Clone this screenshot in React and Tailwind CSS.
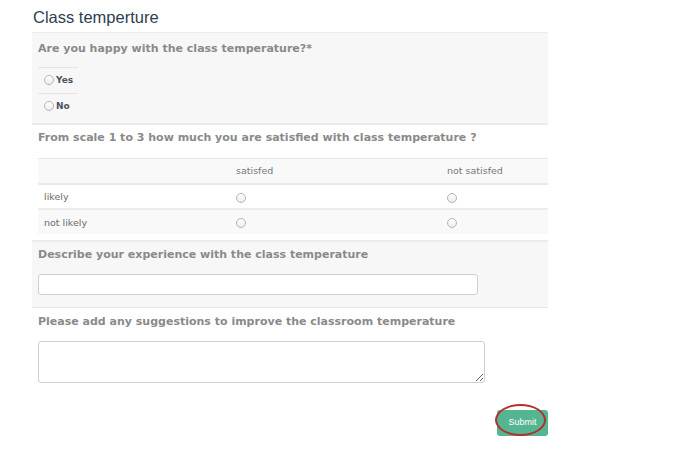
import React from "react";

const Radio = () => (
  <span className="inline-block w-[10px] h-[10px] rounded-full border border-[#b5b5b5] bg-gradient-to-b from-white to-[#ececec] shrink-0" />
);

const qText = "font-bold text-[11px] leading-[14px] text-[#8a8a8a]";

const App = () => {
  return (
    <div className="w-[692px] h-[450px] bg-white pl-[32px] font-['DejaVu_Sans',sans-serif]">
      {/* Title */}
      <div className="h-[32px] pt-[7px] pl-[1px] font-['Liberation_Sans',Arial,sans-serif] text-[16.5px] leading-[20px] text-[#2d3e50]">
        Class temperture
      </div>

      <div className="w-[516px]">
        {/* Happy question */}
        <div className="bg-[#f7f7f7] border-t border-[#ececec] border-b-2 border-b-[#ececec] h-[93px] px-[6px] pt-[9px]">
          <div className={qText}>Are you happy with the class temperature?*</div>
          <div className="mt-[11px] w-[40px] border-t border-[#e4e4e4]" />
          <div className="flex items-center gap-[2px] h-[26px] pl-[6px] w-[40px] border-b border-[#e4e4e4] text-[9px] font-bold text-[#4d5360]">
            <span className="mt-[3px]"><Radio /></span>
            <span>Yes</span>
          </div>
          <div className="flex items-center gap-[2px] h-[25px] pl-[6px] text-[9px] font-bold text-[#4d5360]">
            <span className="mt-[3px]"><Radio /></span>
            <span>No</span>
          </div>
        </div>

        {/* Scale question */}
        <div className="h-[115px] px-[6px] pt-[6px]">
          <div className={qText}>From scale 1 to 3 how much you are satisfied with class temperature ?</div>
          <div className="mt-[13px] mr-[-6px] text-[9.5px] text-[#6a6a6a]">
            <div className="flex h-[27px] items-center bg-[#f9f9f9] border-t border-[#e6e6e6] border-b-2 border-b-[#e9e9e9]">
              <div className="w-[198px]" />
              <div className="w-[211px] text-[#777]">satisfed</div>
              <div className="text-[#777]">not satisfed</div>
            </div>
            <div className="flex h-[25px] items-center pt-[2px] border-b-2 border-[#ececec]">
              <div className="w-[198px] pl-[6px]">likely</div>
              <div className="w-[211px] flex"><Radio /></div>
              <div className="flex"><Radio /></div>
            </div>
            <div className="flex h-[24px] items-center pt-[2px] bg-[#f9f9f9]">
              <div className="w-[198px] pl-[6px]">not likely</div>
              <div className="w-[211px] flex"><Radio /></div>
              <div className="flex"><Radio /></div>
            </div>
          </div>
        </div>

        {/* Describe */}
        <div className="bg-[#f7f7f7] border-t-2 border-[#ececec] border-b border-b-[#e6e6e6] h-[68px] px-[6px] pt-[6px]">
          <div className={qText}>Describe your experience with the class temperature</div>
          <input
            type="text"
            className="mt-[12px] block w-[440px] h-[21px] bg-white border border-[#cfcfcf] rounded-[3px] outline-none"
          />
        </div>

        {/* Suggestions */}
        <div className="px-[6px] pt-[7px]">
          <div className={qText}>Please add any suggestions to improve the classroom temperature</div>
          <textarea className="mt-[12px] block w-[447px] h-[42px] bg-white border border-[#cfcfcf] rounded-[3px] outline-none" />
        </div>

        {/* Submit */}
        <div className="flex justify-end mt-[25px]">
          <div className="relative">
            <button className="w-[51px] h-[26px] bg-[#55b593] rounded-[3px] text-white text-[9px] font-['Liberation_Sans',Arial,sans-serif]">
              Submit
            </button>
            <span className="absolute left-[-2px] top-[-4px] w-[51px] h-[32px] rounded-[50%] border-2 border-[#b3302b]" />
          </div>
        </div>
      </div>
    </div>
  );
};

export default App;
